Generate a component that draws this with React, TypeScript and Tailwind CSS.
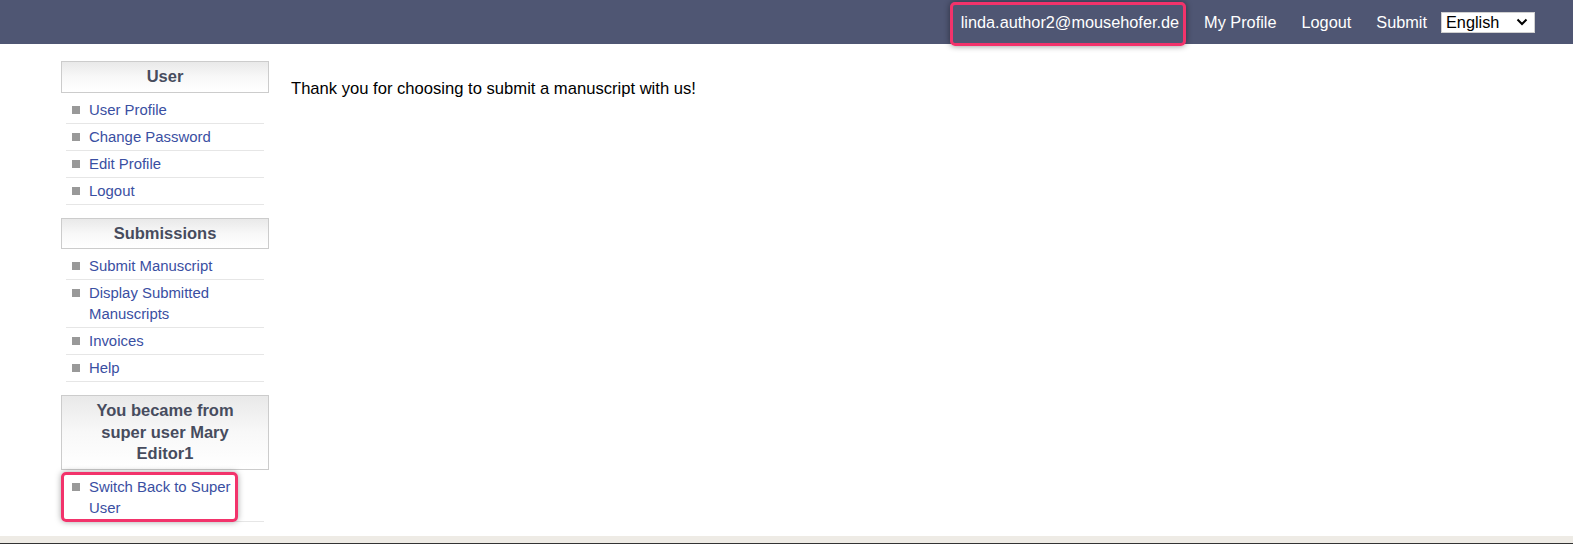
const font = { fontFamily: '"Liberation Sans", Arial, sans-serif' };

type Item = { label: string; mark?: boolean };

const Box = ({ title, items }: { title: string; items: Item[] }) => (
  <div className="mb-[13px]">
    <div className="border border-[#cccccc] bg-gradient-to-b from-[#e9e9e9] via-[#f8f8f8] to-white px-[14px] py-[4px] text-center text-[16.5px] leading-[21.5px] font-bold text-[#474c5e]">
      {title}
    </div>
    <ul className="mx-[5px] mt-[4px]">
      {items.map((it) => (
        <li
          key={it.label}
          className="relative flex border-b border-[#e6e6e6] pt-[3px] pb-[2px] pl-[6px] text-[14.9px] leading-[21px] text-[#3a4fa2]"
        >
          <span className="mt-[6px] mr-[9px] h-[8px] w-[8px] shrink-0 bg-[#999999]" />
          <span className="pr-1">{it.label}</span>
          {it.mark && (
            <span className="absolute -top-[2px] -left-[5px] right-[26px] -bottom-[1px] rounded-[5px] border-[3px] border-[#f2336b] shadow-[0_0_6px_rgba(0,0,0,0.35)]" />
          )}
        </li>
      ))}
    </ul>
  </div>
);

export default function App() {
  return (
    <div className="flex h-[544px] flex-col overflow-hidden bg-white" style={font}>
      <header className="flex h-[44px] shrink-0 items-center justify-end bg-[#4f5673] pr-[38px] text-[16.3px] text-white">
        <span className="relative mr-[25px]">
          linda.author2@mousehofer.de
          <span className="absolute -top-[8px] -left-[11px] -right-[7px] -bottom-[12px] rounded-[5px] border-[3px] border-[#f2336b] shadow-[0_0_6px_rgba(0,0,0,0.45)]" />
        </span>
        <span className="mr-[25px]">My Profile</span>
        <span className="mr-[25px]">Logout</span>
        <span className="mr-[14px]">Submit</span>
        <div className="flex h-[21px] w-[94px] items-center justify-between border border-[#d0d0d0] bg-white pr-[6px] pl-[4px] text-[16.3px] text-black">
          <span className="leading-none">English</span>
          <svg width="12" height="8" viewBox="0 0 12 8" fill="none">
            <path d="M1.5 1.5 6 6l4.5-4.5" stroke="#000" strokeWidth="2" />
          </svg>
        </div>
      </header>

      <div className="flex flex-1 pt-[17px] pl-[61px]">
        <aside className="w-[208px] shrink-0">
          <Box
            title="User"
            items={[
              { label: "User Profile" },
              { label: "Change Password" },
              { label: "Edit Profile" },
              { label: "Logout" },
            ]}
          />
          <Box
            title="Submissions"
            items={[
              { label: "Submit Manuscript" },
              { label: "Display Submitted Manuscripts" },
              { label: "Invoices" },
              { label: "Help" },
            ]}
          />
          <Box
            title="You became from super user Mary Editor1"
            items={[{ label: "Switch Back to Super User", mark: true }]}
          />
        </aside>
        <main className="pt-[19px] pl-[22px] text-[16.6px] leading-[18px] text-black">
          Thank you for choosing to submit a manuscript with us!
        </main>
      </div>

      <div className="h-[7px] shrink-0 bg-[#eeebe5]" />
      <div className="h-[1px] shrink-0 bg-[#333333]" />
    </div>
  );
}
